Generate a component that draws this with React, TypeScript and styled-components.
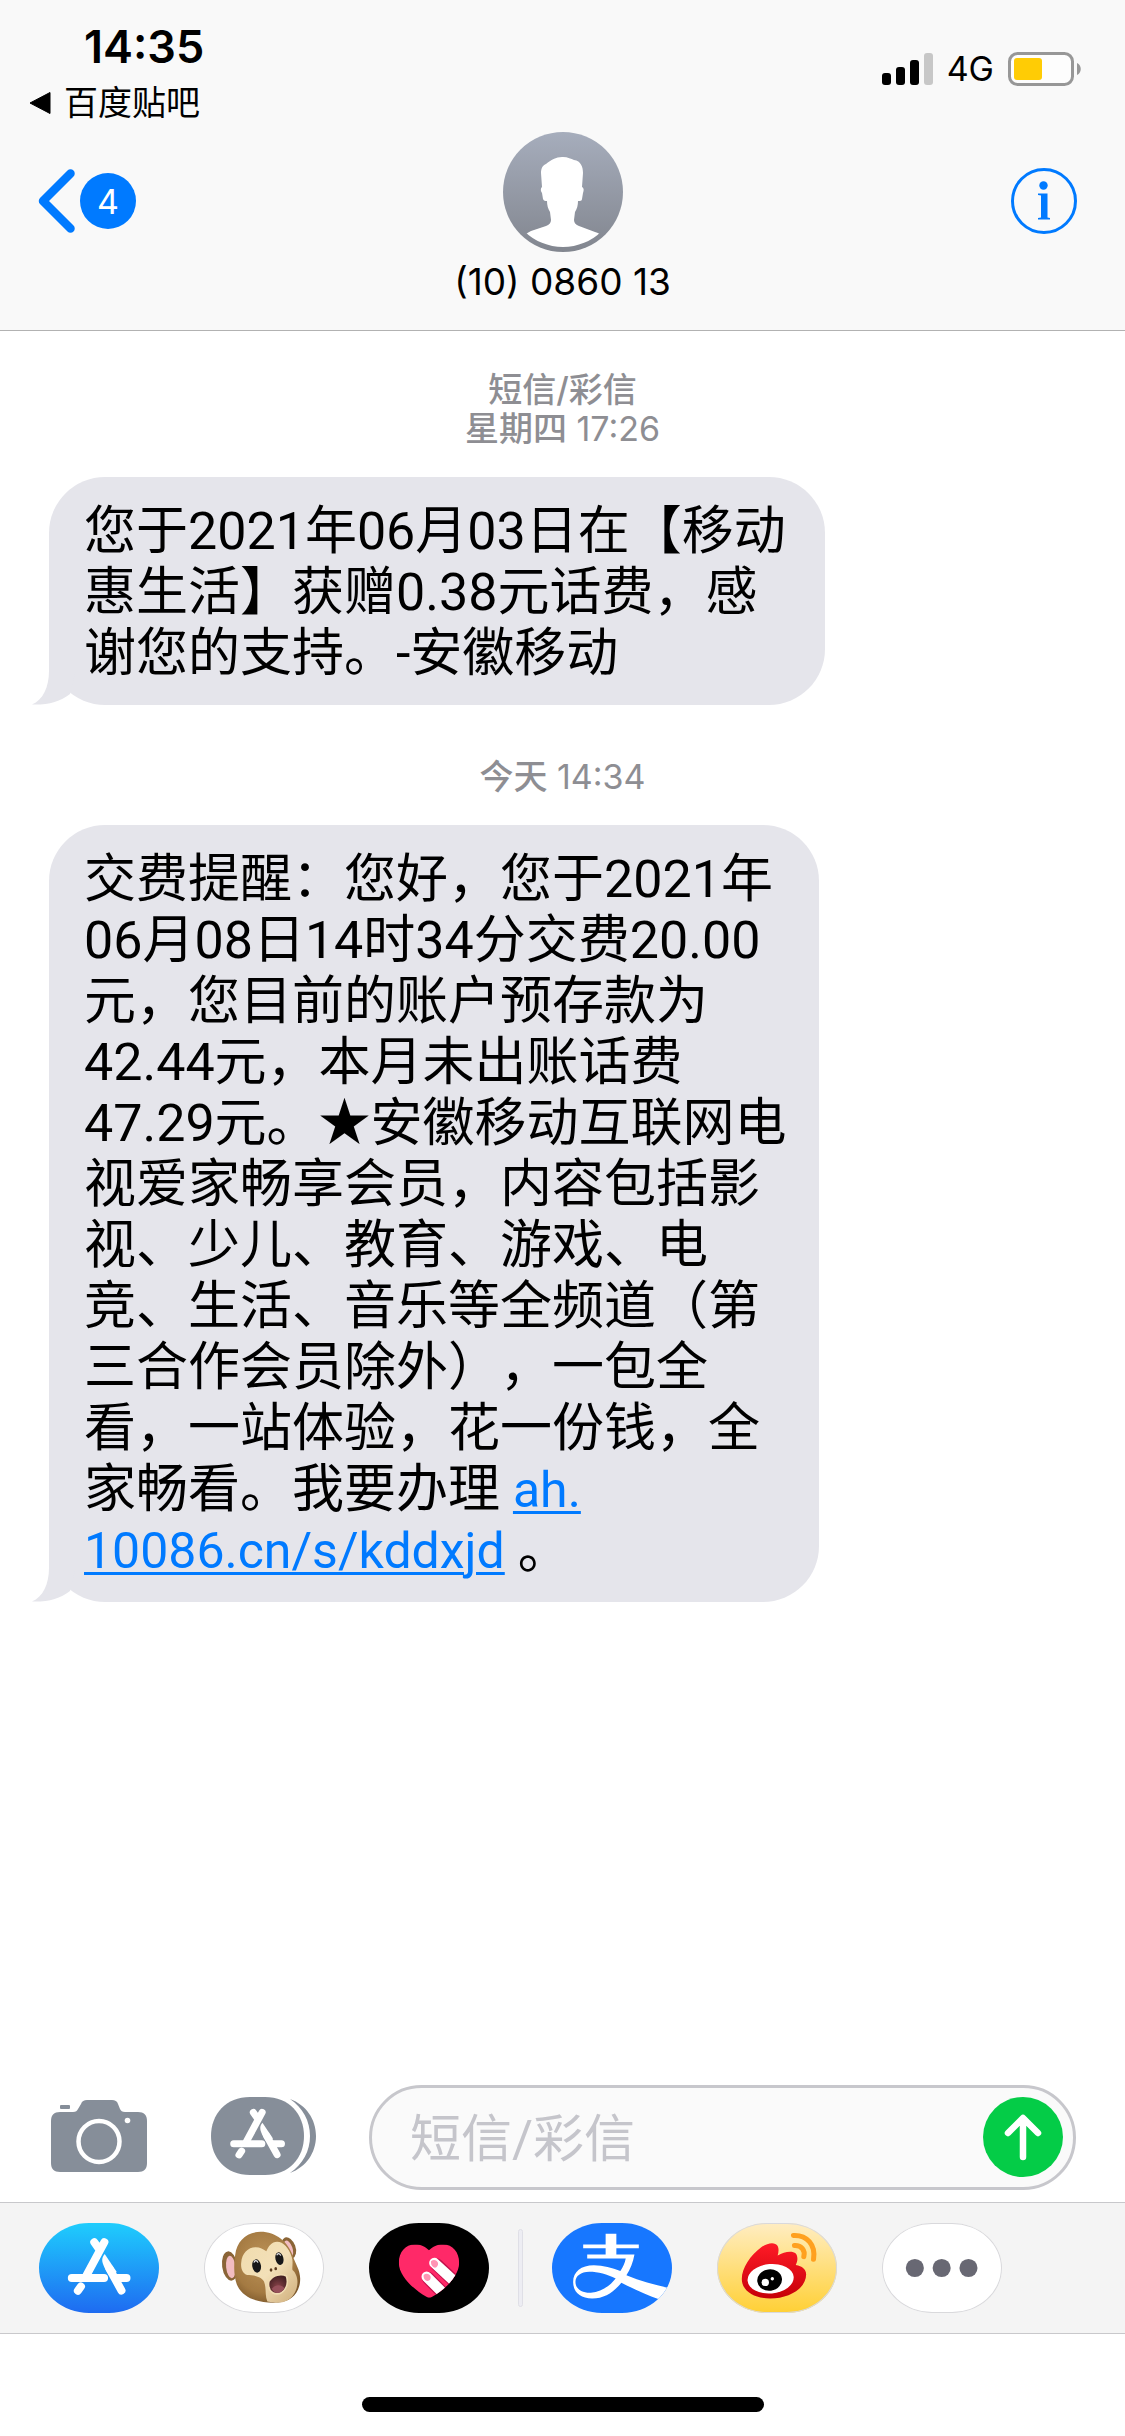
import React from "react";
import styled, { createGlobalStyle } from "styled-components";

const GlobalStyle = createGlobalStyle`
  *, *::before, *::after { box-sizing: border-box; }
  body {
    margin: 0;
    background: #fff;
    color: #000;
    font-family: Roboto, "Noto Sans CJK SC", sans-serif;
    text-spacing-trim: space-all;
  }
  button, input { font: inherit; color: inherit; }
`;

const BLUE = "#007aff";
const BUBBLE = "#e5e5eb";

const Screen = styled.div`
  display: flex;
  flex-direction: column;
  min-height: 100vh;
`;

const PlainButton = styled.button`
  display: flex;
  align-items: center;
  padding: 0;
  border: 0;
  background: none;
  cursor: pointer;
`;

/* ---------- header ---------- */

const Header = styled.header`
  background: #f9f9f9;
  border-bottom: 1px solid #b2b2b2;
`;

const StatusBar = styled.div`
  display: flex;
  justify-content: space-between;
  height: 132px;
  padding: 0 44px 0 28px;
`;

const StatusLeft = styled.div`
  display: flex;
  flex-direction: column;
  gap: 10px;
  padding-top: 21px;
`;

const Time = styled.time`
  padding-left: 56px;
  font-family: Inter, sans-serif;
  font-size: 45px;
  line-height: 52px;
  font-weight: 600;
`;

const ReturnButton = styled(PlainButton)`
  gap: 12px;
  font-size: 34px;
  line-height: 40px;
`;

const StatusRight = styled.div`
  display: flex;
  align-items: center;
  gap: 14px;
  padding-top: 6px;
  font-family: Inter, sans-serif;
  font-size: 34px;
  line-height: 40px;
`;

const NavBar = styled.nav`
  display: grid;
  grid-template-columns: 1fr auto 1fr;
  height: 198px;
  padding: 0 38px;
`;

const BackButton = styled(PlainButton)`
  justify-self: start;
  height: 138px;
  gap: 5px;
`;

const Badge = styled.span`
  display: grid;
  place-items: center;
  width: 56px;
  height: 56px;
  border-radius: 50%;
  background: ${BLUE};
  color: #fff;
  font-family: Inter, sans-serif;
  font-size: 34px;
`;

const InfoButton = styled(PlainButton)`
  justify-self: end;
  height: 138px;
  padding-right: 10px;
`;

const Contact = styled(PlainButton)`
  flex-direction: column;
  gap: 8px;
  align-self: start;
`;

const ContactName = styled.span`
  font-family: Inter, sans-serif;
  font-size: 37px;
  line-height: 44px;
`;

/* ---------- messages ---------- */

const Messages = styled.main`
  flex: 1;
  padding: 39px 49px;
`;

const Stamp = styled.p`
  margin: 0 0 29px;
  color: #8e8e93;
  text-align: center;
  font-family: Inter, "Noto Sans CJK SC", sans-serif;
  font-size: 34px;
  line-height: 39px;
`;

const StampStrong = styled.span`
  display: block;
  font-weight: 500;
`;

const StampDay = styled.span`
  font-weight: 500;
`;

const Bubble = styled.article<{ $measure: number }>`
  position: relative;
  width: fit-content;
  max-width: ${(p) => p.$measure}px;
  margin-bottom: 52px;
  padding: 24px 30px 21px 35px;
  border-radius: 56px;
  background: ${BUBBLE};
  font-size: 52px;
  line-height: 61px;
`;

const TailArt = styled.svg`
  position: absolute;
  left: -17px;
  bottom: 0;
`;

const MessageText = styled.p`
  margin: 0;
`;

const MessageLink = styled.a`
  color: ${BLUE};
  font-size: 50px;
  line-height: 50px;
  text-decoration: underline;
  text-decoration-thickness: 3px;
  text-underline-offset: 4px;
`;

/* ---------- composer ---------- */

const Composer = styled.form`
  display: flex;
  align-items: center;
  padding: 0 49px 12px 51px;
`;

const Tool = styled(PlainButton).attrs({ type: "button" })<{ $gap: number }>`
  flex: none;
  margin-right: ${(p) => p.$gap}px;
  padding-bottom: 3px;
`;

const Field = styled.div`
  display: flex;
  flex: 1;
  align-items: center;
  min-width: 0;
  height: 105px;
  padding: 0 10px 2px 38px;
  border: 3px solid #c7c7cc;
  border-radius: 53px;
  background: #fafafa;
`;

const TextInput = styled.input`
  flex: 1;
  min-width: 0;
  padding: 6px 0 0;
  border: 0;
  outline: 0;
  background: none;
  font-size: 51px;
  line-height: 60px;
  &::placeholder { color: #c5c5cb; opacity: 1; }
`;

const SendButton = styled(PlainButton)`
  flex: none;
  justify-content: center;
  width: 80px;
  height: 80px;
  border-radius: 50%;
  background: #04cc47;
`;

/* ---------- app drawer ---------- */

const Drawer = styled.nav`
  display: flex;
  align-items: center;
  gap: 45px;
  height: 132px;
  padding: 0 39px;
  border: solid #c8c8cb;
  border-width: 1px 0;
  background: #f4f4f4;
`;

const Tile = styled(PlainButton)<{ $bg: string; $outlined?: boolean }>`
  width: 120px;
  height: 90px;
  overflow: hidden;
  border-radius: 50px / 45px;
  background: ${(p) => p.$bg};
  box-shadow: ${(p) => (p.$outlined ? "inset 0 0 0 1px #d9d9dc" : "none")};
`;

const Divider = styled.span`
  width: 5px;
  height: 78px;
  margin: 0 -16px;
  border: 1px solid #dfdfe6;
  border-radius: 3px;
  background: #ededf3;
`;

const HomeArea = styled.footer`
  display: flex;
  justify-content: center;
  padding: 63px 0 24px;
`;

const HomeIndicator = styled.span`
  width: 402px;
  height: 15px;
  border-radius: 8px;
  background: #000;
`;

/* ---------- drawings ---------- */

const Signal = () => (
  <svg width="51" height="32" viewBox="0 0 51 32" aria-hidden>
    <rect x="0" y="20" width="9" height="12" rx="3" />
    <rect x="14" y="14" width="9" height="18" rx="3" />
    <rect x="28" y="7" width="9" height="25" rx="3" />
    <rect x="42" y="0" width="9" height="32" rx="3" fill="#c7c7c7" />
  </svg>
);

const Battery = () => (
  <svg width="73" height="34" viewBox="0 0 73 34" aria-hidden>
    <rect x="1.5" y="1.5" width="63" height="31" rx="8" fill="#fff" fillOpacity=".6" stroke="#979797" strokeWidth="3" />
    <rect x="6" y="6" width="28" height="22" rx="3" fill="#ffcc05" />
    <path d="M69 11c5 2 5 10 0 12z" fill="#979797" />
  </svg>
);

const Triangle = () => (
  <svg width="24" height="24" viewBox="0 0 24 24" aria-hidden>
    <path d="M2 12 22 1.500v21z" stroke="#000" strokeWidth="1" strokeLinejoin="round" />
  </svg>
);

const Chevron = () => (
  <svg width="37" height="64" viewBox="0 0 37 64" fill="none" aria-hidden>
    <path d="M32.500 4.500 5 32l27.500 27.500" stroke={BLUE} strokeWidth="8.500" strokeLinecap="round" strokeLinejoin="round" />
  </svg>
);

const Avatar = () => (
  <svg width="120" height="120" viewBox="0 0 120 120" aria-hidden>
    <defs>
      <linearGradient id="avatar" x1="0" y1="0" x2="0" y2="1">
        <stop offset="0" stopColor="#a6adbc" />
        <stop offset="1" stopColor="#82868f" />
      </linearGradient>
      <clipPath id="avatarClip"><circle cx="60" cy="60" r="55" /></clipPath>
    </defs>
    <circle cx="60" cy="60" r="60" fill="url(#avatar)" />
    <path
      clipPath="url(#avatarClip)"
      fill="#fff"
      d="M60 25c5 0 8 2 11 3 7 1 9 7 9 13l-1 14c2 1 2 3 1 6l-1 6c0 2-2 2-4 2 0 4-1 8-3 11l-1 8c0 3 2 5 5 6l16 6c3 1 6 2 8 4v16H20v-16c2-2 5-3 8-5l15-5c3-1 5-3 5-6l-1-8c-2-3-3-7-3-11-2 0-3 0-4-2l-1-6c-2-3-1-5 0-6l-1-14c0-5 2-8 5-9 5-4 10-7 16-7z"
    />
  </svg>
);

const Info = () => (
  <svg width="66" height="66" viewBox="0 0 66 66" aria-hidden>
    <circle cx="33" cy="33" r="31.500" fill="none" stroke={BLUE} strokeWidth="3" />
    <circle cx="32.500" cy="17.500" r="4.200" fill={BLUE} />
    <path d="M27 25.500h9.500v24l2.500.5v1.500H27V50l3-.5V27.500l-3-.5z" fill={BLUE} />
  </svg>
);

const Tail = () => (
  <TailArt width="60" height="60" viewBox="0 0 60 60" aria-hidden>
    <path d="M17 0v26C17 42 11 55 0 59.500 16 60 28 57 38 49L45 20z" fill={BUBBLE} />
  </TailArt>
);

const Camera = () => (
  <svg width="96" height="72" viewBox="0 0 96 72" aria-hidden>
    <path
      fill="#868e99"
      d="M9 12h13c3 0 4-1 5-3l3-5c1-3 3-4 6-4h25c3 0 5 1 6 4l2 5c1 2 2 3 5 3h13c6 0 9 3 9 9v42c0 6-3 9-9 9H9c-6 0-9-3-9-9V21c0-6 3-9 9-9z"
    />
    <rect x="9" y="5" width="10" height="4" rx="1" fill="#868e99" />
    <circle cx="48" cy="41.500" r="20.500" fill="none" stroke="#fff" strokeWidth="4.500" />
    <circle cx="76.500" cy="20.500" r="2.800" fill="#fff" />
  </svg>
);

const StoreStrokes = () => (
  <g stroke="#fff" strokeLinecap="round" fill="none">
    <path d="M253 97 200 195M223 97l14 20" strokeWidth="24" />
    <path d="M156 204h96M288 204h31" strokeWidth="24" />
    <path d="m183 229-9 13" strokeWidth="24" />
    <path d="M268 176 304 241" strokeWidth="24" />
    <path d="M254 132c-12 14-8 26 2 46l12 20 22-12z" fill="#fff" stroke="none" />
  </g>
);

const AppsGray = () => (
  <svg width="106" height="78" viewBox="0 0 106 78" aria-hidden>
    <path
      fill="#868e99"
      d="M39 0h15C78 0 93 17 93 39S78 78 54 78H39C15 78 0 61 0 39S15 0 39 0z"
    />
    <path fill="#868e99" d="M79 2c16 6 26 20 26 37s-10 31-26 37c13-9 20-22 20-37S92 11 79 2z" />
    <g transform="translate(-23 -13) scale(.293)">
      <StoreStrokes />
    </g>
  </svg>
);

const AppStore = () => (
  <svg width="120" height="90" viewBox="58 40 358 268" aria-hidden>
    <StoreStrokes />
  </svg>
);

const Monkey = () => (
  <svg width="120" height="90" viewBox="553 40 358 268" aria-hidden>
    <defs>
      <radialGradient id="fur" cx=".45" cy=".4" r=".65">
        <stop offset="0" stopColor="#bd9358" />
        <stop offset=".7" stopColor="#a47a42" />
        <stop offset="1" stopColor="#7b572b" />
      </radialGradient>
      <linearGradient id="face" x1="0" y1="0" x2="1" y2="1">
        <stop offset="0" stopColor="#f0dcae" />
        <stop offset=".5" stopColor="#f3e0b8" />
        <stop offset="1" stopColor="#cfae7b" />
      </linearGradient>
      <radialGradient id="mouth" cx=".5" cy=".65" r=".6">
        <stop offset="0" stopColor="#8b454b" />
        <stop offset="1" stopColor="#431f22" />
      </radialGradient>
    </defs>
    <ellipse cx="630" cy="168" rx="23" ry="44" transform="rotate(-8 630 168)" fill="#8a6436" />
    <ellipse cx="633" cy="171" rx="14" ry="34" transform="rotate(-6 633 171)" fill="#f2bcc0" />
    <ellipse cx="806" cy="114" rx="20" ry="33" transform="rotate(-20 806 114)" fill="#8a6436" />
    <ellipse cx="805" cy="116" rx="12" ry="25" transform="rotate(-20 805 116)" fill="#f2bcc0" />
    <path
      fill="url(#fur)"
      d="M722 66c45 0 82 30 96 72 8 24 22 42 22 68 0 42-28 69-66 71-48 3-104-8-123-54-10-26-9-62-5-88 5-42 34-69 76-69z"
    />
    <path
      fill="url(#face)"
      d="M664 158c2-28 20-46 43-46 14 0 22 6 32 12 6-14 16-28 32-28 19 0 35 18 44 46 5 16 0 28 2 38 12 10 20 32 11 58-9 26-28 37-49 39-12 1-25 0-37-3-8-18-2-40-10-60-10-18-36-18-50-19-14-4-20-20-18-37z"
    />
    <ellipse cx="710" cy="168" rx="13" ry="20" transform="rotate(-10 710 168)" fill="#171719" />
    <ellipse cx="778" cy="146" rx="12" ry="19" transform="rotate(-14 778 146)" fill="#171719" />
    <path d="M702 158c2-8 9-8 12 0M770 136c3-7 9-7 12 1" stroke="#e7e7ea" strokeWidth="3.500" fill="none" />
    <ellipse cx="753" cy="180" rx="4" ry="5" fill="#5a3a1c" />
    <ellipse cx="767" cy="176" rx="4" ry="5" fill="#5a3a1c" />
    <path
      d="M747 213c12-18 36-24 52-15 6 20 1 40-17 51-18 7-34-4-36-20-1-6-1-10 1-16z"
      fill="url(#mouth)"
      stroke="#f1dcb2"
      strokeWidth="5"
    />
    <path d="M755 236c10-13 28-14 38-2-8 17-27 21-38 2z" fill="#96505a" />
  </svg>
);

const HeartTouch = () => (
  <svg width="120" height="90" viewBox="1048 40 358 268" aria-hidden>
    <defs>
      <clipPath id="heart">
        <path d="M1227 121c12-11 24-17 42-17 29 0 48 23 48 54 0 42-48 84-79 101-8 5-12 5-20 0-33-19-81-59-81-101 0-31 19-54 48-54 18 0 30 6 42 17z" />
      </clipPath>
    </defs>
    <g clipPath="url(#heart)">
      <rect x="1130" y="100" width="190" height="170" fill="#ff2968" />
      <g strokeLinecap="round" fill="none">
        <path d="m1250 164 70 66M1224 204l60 60" stroke="#c4114c" strokeWidth="38" />
        <path d="m1243 159 80 74M1220 200l70 70" stroke="#fff" strokeWidth="31" />
      </g>
      <path d="M1233 154c8-7 18-3 21 5 1 7-3 13-9 14-8-1-13-9-12-19zM1211 195c8-7 18-3 21 5 1 7-3 12-9 13-8-1-13-8-12-18z" fill="#ff95b5" />
    </g>
  </svg>
);

const Alipay = () => (
  <svg width="120" height="90" viewBox="37 40 358 268" fill="#fff" aria-hidden>
    <path d="M197 72h32v32h67v11h-67v19h54c-4 24-13 45-24 62 41 17 82 28 124 37l-27 34c-36-12-74-30-112-49-24 29-51 47-87 47-36 0-57-20-57-49 0-31 24-50 62-50 28 0 54 8 79 17 8-11 13-23 16-37H142v-12h55v-19h-67v-11h67zM107 215c0 21 18 34 46 33 32-2 57-22 74-43-25-12-52-20-79-20-25 0-41 13-41 30z" fillRule="evenodd" />
  </svg>
);

const Weibo = () => (
  <svg width="120" height="90" viewBox="532 40 358 268" aria-hidden>
    <defs>
      <linearGradient id="weibo" x1="0" y1="0" x2="0" y2="1">
        <stop offset="0" stopColor="#ff1b27" />
        <stop offset="1" stopColor="#c60008" />
      </linearGradient>
    </defs>
    <path
      fill="url(#weibo)"
      d="M606 207c0-34 26-71 58-95 20-14 41-16 49-4 4 8 3 18 0 29 19-12 44-16 54-6 6 8 7 20 0 34 19 3 31 13 31 28 0 43-52 72-107 72-47 0-85-22-85-58z"
    />
    <ellipse cx="692" cy="206" rx="69" ry="44" transform="rotate(-5 692 206)" fill="#fff" />
    <ellipse cx="689" cy="210" rx="37" ry="32" transform="rotate(-8 689 210)" />
    <circle cx="676" cy="217" r="11" fill="#fff" />
    <circle cx="697" cy="206" r="5" fill="#fff" />
    <path d="M760 77c40-2 67 28 60 71M763 107c21-1 33 14 28 33" fill="none" stroke="#ffa01f" strokeWidth="15" strokeLinecap="round" />
  </svg>
);

const More = () => (
  <svg width="120" height="90" viewBox="1027 40 358 268" fill="#686873" aria-hidden>
    <circle cx="1125" cy="174" r="27" />
    <circle cx="1205" cy="174" r="27" />
    <circle cx="1285" cy="174" r="27" />
  </svg>
);

const ArrowUp = () => (
  <svg width="40" height="48" viewBox="0 0 40 48" fill="none" aria-hidden>
    <path d="M20 44V6M5 20 20 5l15 15" stroke="#fff" strokeWidth="6.500" strokeLinecap="round" strokeLinejoin="round" />
  </svg>
);

/* ---------- page ---------- */

export default function App() {
  return (
    <Screen>
      <GlobalStyle />
      <Header>
        <StatusBar>
          <StatusLeft>
            <Time>14:35</Time>
            <ReturnButton type="button"><Triangle />百度贴吧</ReturnButton>
          </StatusLeft>
          <StatusRight>
            <Signal />
            <span>4G</span>
            <Battery />
          </StatusRight>
        </StatusBar>
        <NavBar>
          <BackButton type="button">
            <Chevron />
            <Badge>4</Badge>
          </BackButton>
          <Contact type="button">
            <Avatar />
            <ContactName>(10) 0860 13</ContactName>
          </Contact>
          <InfoButton type="button" aria-label="详细信息"><Info /></InfoButton>
        </NavBar>
      </Header>

      <Messages>
        <Stamp>
          <StampStrong>短信/彩信</StampStrong>
          <StampDay>星期四</StampDay> 17:26
        </Stamp>
        <Bubble $measure={776}>
          <Tail />
          <MessageText>
            您于2021年06月03日在【移动惠生活】获赠0.38元话费，感谢您的支持。-安徽移动
          </MessageText>
        </Bubble>
        <Stamp><StampDay>今天</StampDay> 14:34</Stamp>
        <Bubble $measure={770}>
          <Tail />
          <MessageText>
            交费提醒：您好，您于2021年06月08日14时34分交费20.00元，您目前的账户预存款为42.44元，本月未出账话费47.29元。★安徽移动互联网电视爱家畅享会员，内容包括影视、少儿、教育、游戏、电竞、生活、音乐等全频道（第三合作会员除外），一包全看，一站体验，花一份钱，全家畅看。我要办理{" "}
            <MessageLink href="#link">ah.<wbr />10086.cn/s/kddxjd</MessageLink> 。
          </MessageText>
        </Bubble>
      </Messages>

      <Composer onSubmit={(e) => e.preventDefault()}>
        <Tool $gap={64} aria-label="相机"><Camera /></Tool>
        <Tool $gap={52} aria-label="应用"><AppsGray /></Tool>
        <Field>
          <TextInput type="text" aria-label="短信/彩信" placeholder="短信/彩信" />
          <SendButton type="submit" aria-label="发送"><ArrowUp /></SendButton>
        </Field>
      </Composer>

      <Drawer>
        <Tile type="button" aria-label="App Store" $bg="linear-gradient(#1fcdfd, #1e6bf1)"><AppStore /></Tile>
        <Tile type="button" aria-label="Animoji" $bg="#fff" $outlined><Monkey /></Tile>
        <Tile type="button" aria-label="Digital Touch" $bg="#000"><HeartTouch /></Tile>
        <Divider />
        <Tile type="button" aria-label="支付宝" $bg="#1777ff"><Alipay /></Tile>
        <Tile type="button" aria-label="微博" $bg="linear-gradient(#ffedc2, #ffd035)" $outlined><Weibo /></Tile>
        <Tile type="button" aria-label="更多" $bg="#fff" $outlined><More /></Tile>
      </Drawer>

      <HomeArea><HomeIndicator /></HomeArea>
    </Screen>
  );
}
